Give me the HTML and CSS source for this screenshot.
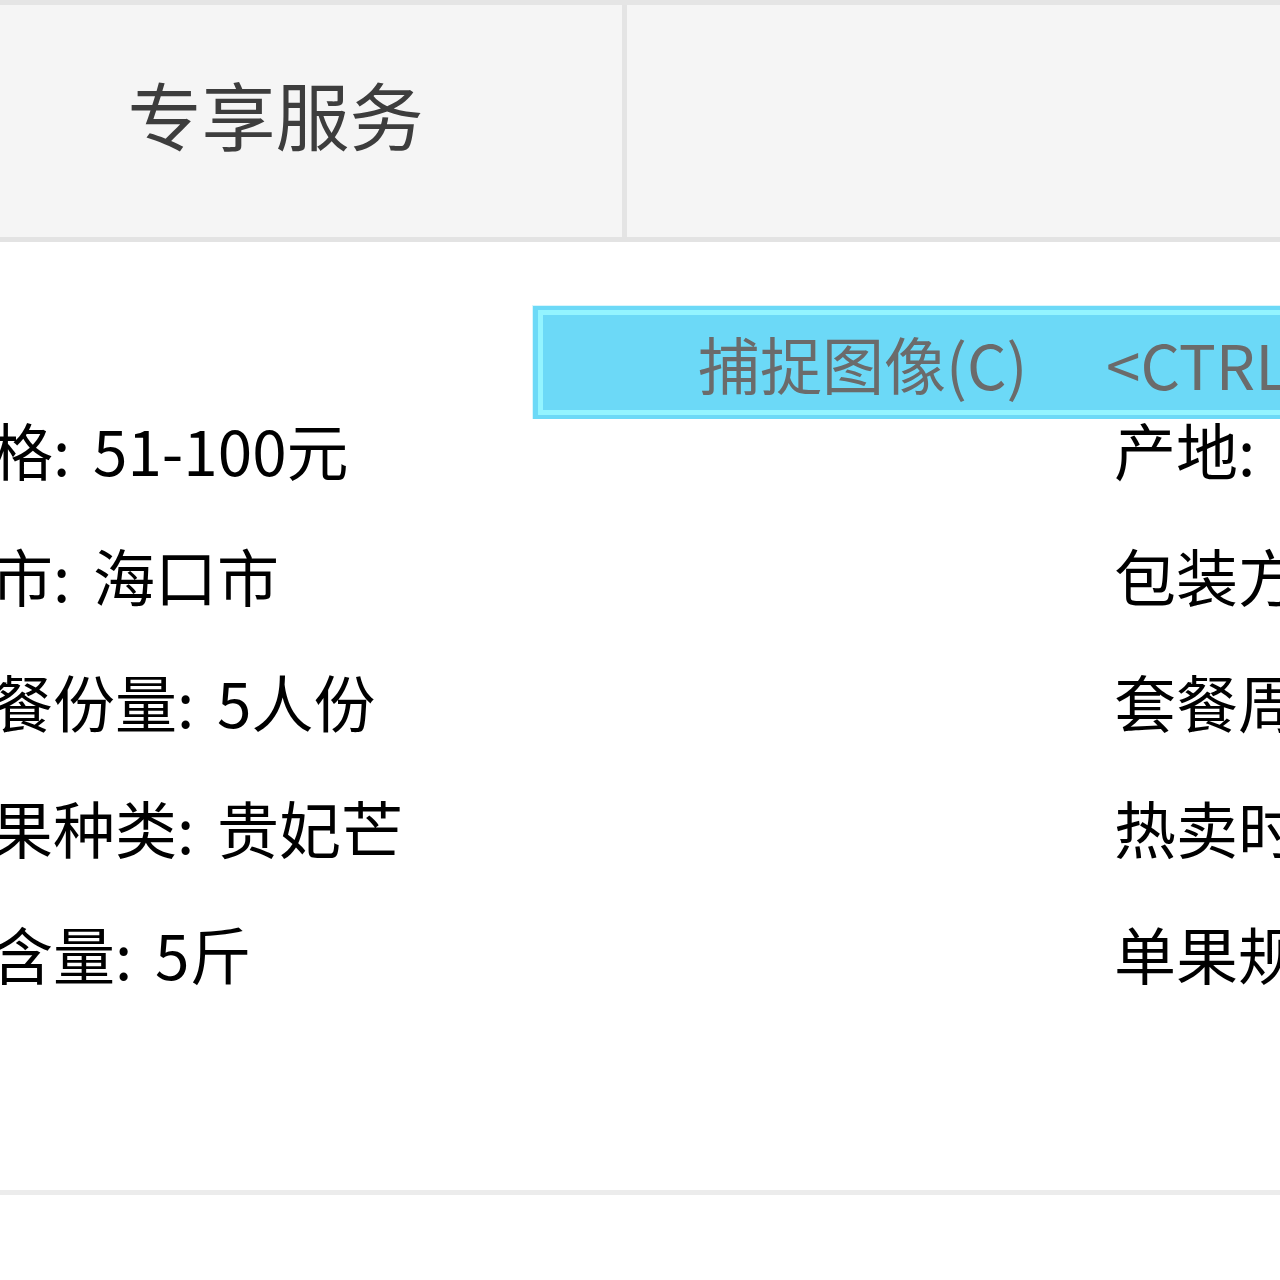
FILE: index.html
```html
<!DOCTYPE html>
<html lang="zh-CN">
<head>
<meta charset="UTF-8">
<title>宝贝详情</title>
<link rel="stylesheet" href="styles.css">
</head>
<body>
	<div class="page">
		<div class="tabs">
			<div class="tab">专享服务</div>
			<div class="tab tab-wide"></div>
		</div>

		<ul class="attrs">
			<li>价格<span class="c">:</span>51-100元</li>
			<li>产地<span class="c">:</span></li>
			<li>城市<span class="c">:</span>海口市</li>
			<li>包装方式<span class="c">:</span>简装</li>
			<li>套餐份量<span class="c">:</span>5人份</li>
			<li>套餐周期<span class="c">:</span>1周</li>
			<li>水果种类<span class="c">:</span>贵妃芒</li>
			<li>热卖时间<span class="c">:</span>5月</li>
			<li>净含量<span class="c">:</span>5斤</li>
			<li>单果规格<span class="c">:</span>大果</li>
		</ul>

		<!-- 截图工具的右键菜单 -->
		<div class="menu">
			<div class="menu-item">
				<span class="menu-label">捕捉图像(C)</span><span class="menu-key">&lt;CTRL+SHIFT+C&gt;</span>
			</div>
		</div>
	</div>
</body>
</html>
```

FILE: styles.css
```css
html, body {
	margin: 0;
	padding: 0;
	overflow: hidden;
	background: #fff;
}
body {
	font-family: "Noto Sans CJK SC", "Liberation Sans", sans-serif;
	color: #000;
}
.page {
	position: relative;
	margin-left: -71px;
	width: 1500px;
}

/* tabs */
.tabs {
	display: flex;
	height: 232px;
	background: #f5f5f5;
	border-top: 5px solid #e5e5e5;
	border-bottom: 5px solid #e3e3e3;
}
.tab {
	width: 698px;
	flex-shrink: 0;
	border-right: 5px solid #e4e4e4;
	display: flex;
	align-items: center;
	justify-content: center;
	padding-bottom: 18px;
	box-sizing: border-box;
	font-size: 74px;
	color: #3d3d3d;
}
.tab-wide {
	flex: 1;
	border-right: none;
}

/* attributes */
.attrs {
	list-style: none;
	margin: 0;
	padding: 144px 0 174px;
	display: grid;
	grid-template-columns: 1185px 1fr;
	border-bottom: 5px solid #ececec;
}
.attrs li {
	height: 126px;
	line-height: 126px;
	font-size: 62px;
	white-space: nowrap;
	overflow: hidden;
}
.attrs .c {
	display: inline-block;
	width: 40px;
}

/* context menu */
.menu {
	position: absolute;
	left: 603px;
	top: 305px;
	width: 900px;
	height: 114px;
	background: #6cd9f7;
	border-top: 1px solid #d8f6fd;
	border-left: 1px solid #d8f6fd;
	padding: 4px 0 4px 5px;
	box-sizing: border-box;
}
.menu-item {
	height: 100%;
	border: 5px solid #93f4ff;
	border-right: none;
	box-sizing: border-box;
	display: flex;
	align-items: center;
	padding-left: 155px;
	font-size: 62px;
	color: #6b6b6b;
	white-space: nowrap;
}
.menu-label {
	flex-shrink: 0;
	width: 408px;
}
.menu-key {
	flex-shrink: 0;
}
```
